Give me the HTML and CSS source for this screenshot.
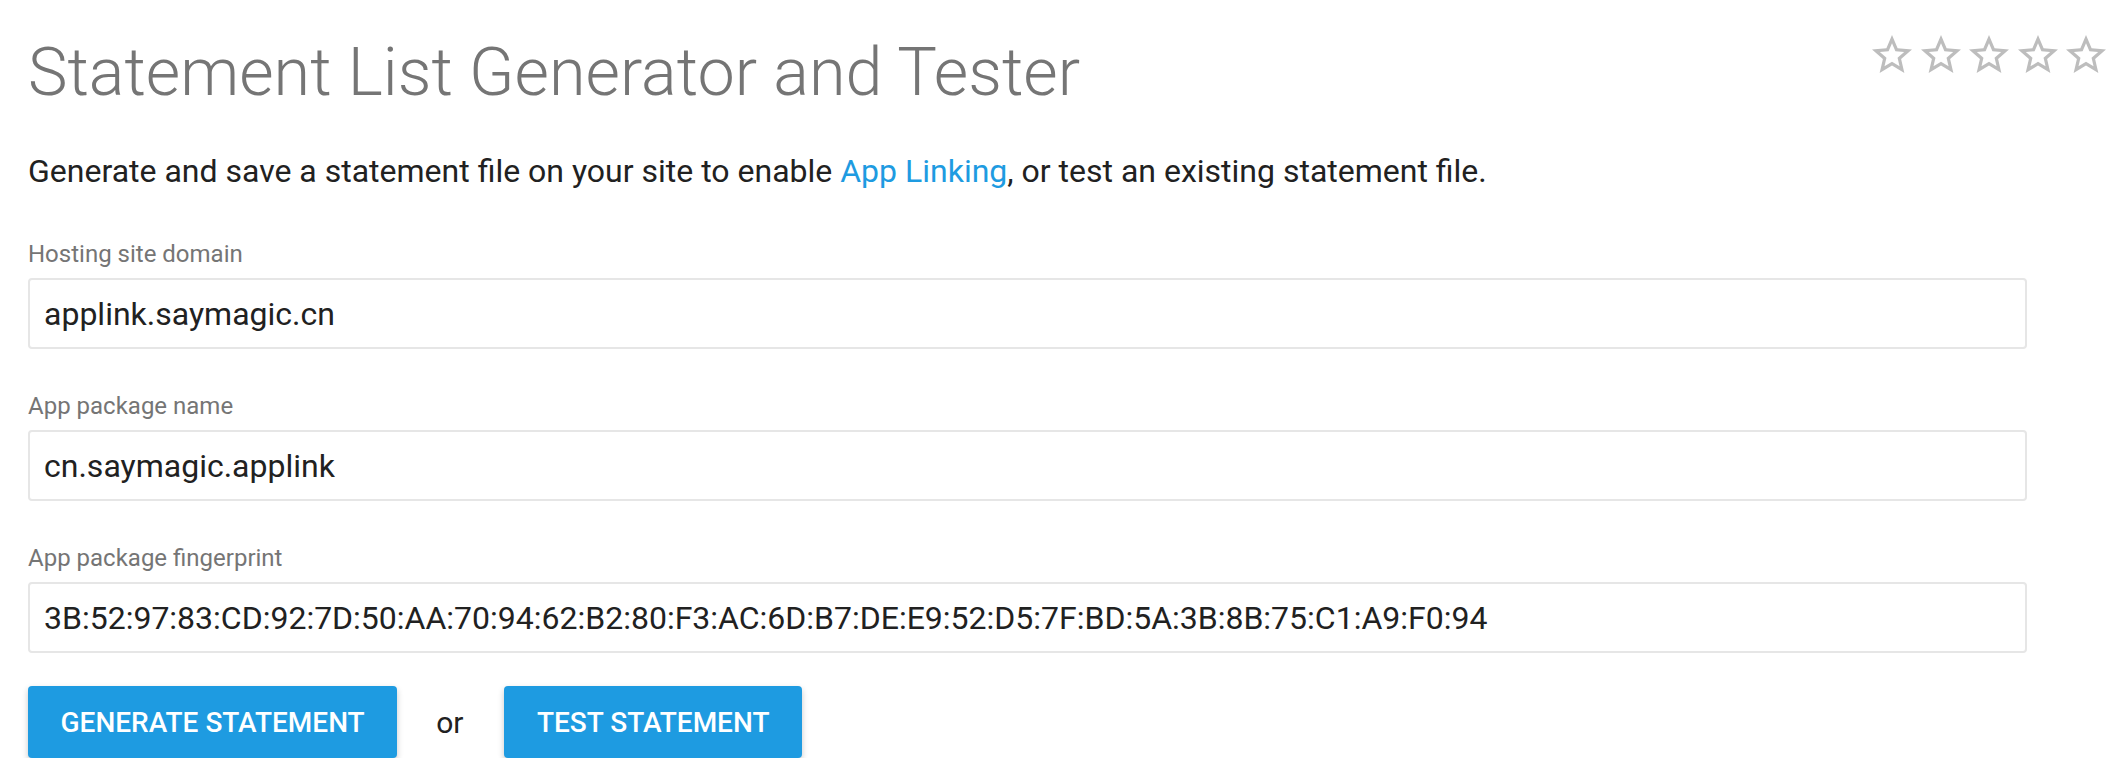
FILE: index.html
```html
<!DOCTYPE html>
<html lang="en">
<head>
<meta charset="utf-8">
<title>Statement List Generator and Tester</title>
<link rel="stylesheet" href="styles.css">
</head>
<body>
<div class="page">
  <header class="header">
    <h1 class="title">Statement List Generator and Tester</h1>
    <div class="rating">
      <svg class="star" viewBox="0 0 24 24"><path d="M22 9.24l-7.19-.62L12 2 9.19 8.63 2 9.24l5.46 4.73L5.82 21 12 17.27 18.18 21l-1.63-7.03L22 9.24zM12 15.4l-3.76 2.27 1-4.28-3.32-2.88 4.38-.38L12 6.1l1.71 4.04 4.38.38-3.32 2.88 1 4.28L12 15.4z"/></svg>
      <svg class="star" viewBox="0 0 24 24"><path d="M22 9.24l-7.19-.62L12 2 9.19 8.63 2 9.24l5.46 4.73L5.82 21 12 17.27 18.18 21l-1.63-7.03L22 9.24zM12 15.4l-3.76 2.27 1-4.28-3.32-2.88 4.38-.38L12 6.1l1.71 4.04 4.38.38-3.32 2.88 1 4.28L12 15.4z"/></svg>
      <svg class="star" viewBox="0 0 24 24"><path d="M22 9.24l-7.19-.62L12 2 9.19 8.63 2 9.24l5.46 4.73L5.82 21 12 17.27 18.18 21l-1.63-7.03L22 9.24zM12 15.4l-3.76 2.27 1-4.28-3.32-2.88 4.38-.38L12 6.1l1.71 4.04 4.38.38-3.32 2.88 1 4.28L12 15.4z"/></svg>
      <svg class="star" viewBox="0 0 24 24"><path d="M22 9.24l-7.19-.62L12 2 9.19 8.63 2 9.24l5.46 4.73L5.82 21 12 17.27 18.18 21l-1.63-7.03L22 9.24zM12 15.4l-3.76 2.27 1-4.28-3.32-2.88 4.38-.38L12 6.1l1.71 4.04 4.38.38-3.32 2.88 1 4.28L12 15.4z"/></svg>
      <svg class="star" viewBox="0 0 24 24"><path d="M22 9.24l-7.19-.62L12 2 9.19 8.63 2 9.24l5.46 4.73L5.82 21 12 17.27 18.18 21l-1.63-7.03L22 9.24zM12 15.4l-3.76 2.27 1-4.28-3.32-2.88 4.38-.38L12 6.1l1.71 4.04 4.38.38-3.32 2.88 1 4.28L12 15.4z"/></svg>
    </div>
  </header>

  <p class="intro">Generate and save a statement file on your site to enable <a class="link" href="#">App Linking</a>, or test an existing statement file.</p>

  <form class="form">
    <div class="field">
      <label class="label" for="domain">Hosting site domain</label>
      <input class="input" id="domain" type="text" value="applink.saymagic.cn">
    </div>
    <div class="field">
      <label class="label" for="pkg">App package name</label>
      <input class="input" id="pkg" type="text" value="cn.saymagic.applink">
    </div>
    <div class="field">
      <label class="label" for="fp">App package fingerprint</label>
      <input class="input" id="fp" type="text" value="3B:52:97:83:CD:92:7D:50:AA:70:94:62:B2:80:F3:AC:6D:B7:DE:E9:52:D5:7F:BD:5A:3B:8B:75:C1:A9:F0:94">
    </div>
    <div class="actions">
      <button class="btn" type="button">Generate Statement</button>
      <span class="or">or</span>
      <button class="btn" type="button">Test Statement</button>
    </div>
  </form>
</div>
</body>
</html>
```

FILE: styles.css
```css
* { box-sizing: border-box; }

html, body {
  margin: 0;
  padding: 0;
  background: #ffffff;
}

body {
  font-family: Roboto, "Liberation Sans", Arial, sans-serif;
  color: #212121;
}

.page {
  padding: 31px 14px 0 28px;
}

.header {
  display: flex;
  justify-content: space-between;
  align-items: flex-start;
}

.title {
  margin: 3px 0 0 0;
  font-size: 66.5px;
  font-weight: 300;
  line-height: 77px;
  color: #757575;
}

.rating {
  display: flex;
}

.star {
  width: 48px;
  height: 48px;
  fill: #bdbdbd;
  margin-left: 0.5px;
}

.intro {
  margin: 40px 0 0 0;
  font-size: 32px;
  line-height: 40px;
  color: #212121;
}

.link {
  color: #1e9be1;
  text-decoration: none;
}

.form {
  width: 1999px;
  margin-top: 47px;
}

.field {
  display: flex;
  flex-direction: column;
  margin-bottom: 41px;
}

.label {
  font-size: 24px;
  line-height: 33px;
  color: #757575;
  margin-bottom: 7px;
}

.input {
  width: 100%;
  height: 71px;
  border: 2px solid #e6e6e6;
  border-radius: 4px;
  padding: 0 14px;
  font-family: Roboto, "Liberation Sans", Arial, sans-serif;
  font-size: 32px;
  color: #212121;
  background: #fff;
  outline: none;
}

.actions {
  display: flex;
  align-items: center;
  margin-top: -8px;
}

.btn {
  height: 72px;
  padding: 0 32.5px;
  border: none;
  border-radius: 4px;
  background: #1e9be1;
  color: #ffffff;
  font-family: Roboto, "Liberation Sans", Arial, sans-serif;
  font-size: 28px;
  font-weight: 500;
  text-transform: uppercase;
  box-shadow: 0 3px 6px rgba(0, 0, 0, 0.22);
  cursor: pointer;
}

.or {
  font-size: 30px;
  color: #212121;
  margin: 0 41px 0 39px;
}
```
